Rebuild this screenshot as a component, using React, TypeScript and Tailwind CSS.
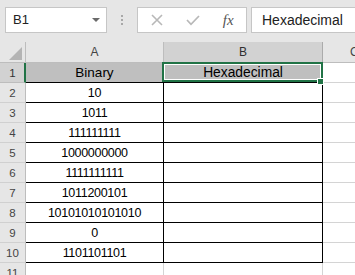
const binaries = [
  '10',
  '1011',
  '111111111',
  '1000000000',
  '1111111111',
  '1011200101',
  '10101010101010',
  '0',
  '1101101101',
];

const font = "font-['Liberation_Sans',Arial,sans-serif]";

function CancelIcon() {
  return (
    <svg width="12" height="12" viewBox="0 0 12 12">
      <path d="M1 1L11 11M11 1L1 11" stroke="#b8b8b8" strokeWidth="1.6" />
    </svg>
  );
}

function EnterIcon() {
  return (
    <svg width="14" height="11" viewBox="0 0 14 11">
      <path d="M1 5L5 9.3L13 1" fill="none" stroke="#b8b8b8" strokeWidth="1.7" />
    </svg>
  );
}

function Toolbar() {
  return (
    <div className="flex h-[42px] items-start bg-[#e6e6e6] pl-[5px] pt-[7px]">
      {/* Name box */}
      <div className="flex h-[26px] w-[102px] shrink-0 items-center justify-between border border-[#c6c6c6] bg-white pl-[7px] pr-[6px]">
        <span className="text-[13px] text-[#222]">B1</span>
        <svg width="8" height="6" viewBox="0 0 8 6">
          <path d="M0 1H8L4 5Z" fill="#6a6a6a" />
        </svg>
      </div>

      {/* Separator dots */}
      <div className="flex h-[26px] w-[30px] shrink-0 flex-col items-center justify-center gap-[2px]">
        <span className="h-[2px] w-[2px] bg-[#a8a8a8]" />
        <span className="h-[2px] w-[2px] bg-[#a8a8a8]" />
        <span className="h-[2px] w-[2px] bg-[#a8a8a8]" />
      </div>

      {/* Cancel / enter / function */}
      <div className="flex h-[26px] w-[110px] shrink-0 items-center border border-[#c6c6c6] bg-white pl-[1px]">
        <div className="flex w-[36px] justify-center">
          <CancelIcon />
        </div>
        <div className="flex w-[36px] justify-center">
          <EnterIcon />
        </div>
        <div className="flex w-[36px] justify-center">
          <span className="font-['Liberation_Serif',serif] text-[15px] italic text-[#555]">fx</span>
        </div>
      </div>

      {/* Formula bar */}
      <div className="ml-[4px] flex h-[26px] w-[130px] shrink-0 items-center border border-[#c6c6c6] bg-white pl-[10px]">
        <span className="text-[14px] text-[#222]">Hexadecimal</span>
      </div>
    </div>
  );
}

function HeaderRow() {
  return (
    <div className="grid h-[21px] grid-cols-[26px_138px_159px_1fr] grid-rows-[21px] bg-[#e6e6e6] text-[12px] leading-[14px] text-[#444]">
      <div className="flex items-end justify-end border-b border-r border-[#bdbdbd] pb-[2px] pr-[3px]">
        <svg width="13" height="13" viewBox="0 0 13 13">
          <path d="M13 0V13H0Z" fill="#b4b4b4" />
        </svg>
      </div>
      <div className="flex items-center justify-center border-b border-r border-[#bdbdbd]">A</div>
      <div className="flex items-center justify-center border-b border-r border-[#ababab] bg-[#d2d2d2] text-[#2f2f2f]">
        B
      </div>
      <div className="flex items-center border-b border-[#bdbdbd] pl-[27px]">C</div>
    </div>
  );
}

function DataRow({ n, value }: { n: number; value: string }) {
  return (
    <div className="grid h-[20px] grid-cols-[26px_138px_159px_1fr] grid-rows-[20px] leading-[16px]">
      <div className="flex items-center justify-center border-b border-r border-b-[#d0d0d0] border-r-[#bdbdbd] bg-[#e6e6e6] pt-[1px] text-[11.5px] text-[#444]">
        {n}
      </div>
      <div className="flex items-center justify-center border-b border-r border-black pt-[1px] text-[12.5px] tracking-[-0.3px] text-black">
        {value}
      </div>
      <div className="border-b border-r border-black bg-white" />
      <div className="border-b border-[#d4d4d4]" />
    </div>
  );
}

export default function App() {
  return (
    <div className={`h-[275px] w-[355px] overflow-hidden bg-white ${font}`}>
      <Toolbar />
      <HeaderRow />

      {/* Row 1: titles */}
      <div className="grid h-[20px] grid-cols-[26px_138px_159px_1fr] grid-rows-[20px] leading-[16px]">
        <div className="flex items-center justify-center border-b border-r-2 border-b-[#bdbdbd] border-r-[#217346] bg-[#d2d2d2] pl-[1px] pt-[1px] text-[11.5px] text-[#333]">
          1
        </div>
        <div className="flex items-center justify-center border-b border-r border-black bg-[#bfbfbf] pt-[1px] text-[13.5px] text-black">
          Binary
        </div>
        <div className="relative flex items-center justify-center border-b border-r border-black bg-[#bfbfbf] pt-[1px] text-[13.8px] text-black">
          Hexadecimal
          <div className="absolute -left-[2px] -right-[1px] -top-[1px] bottom-0 border-2 border-[#217346] shadow-[inset_0_0_0_1px_white]" />
          <div className="absolute -bottom-[3px] -right-[2px] h-[7px] w-[7px] border border-white bg-[#217346]" />
        </div>
        <div className="border-b border-[#d4d4d4]" />
      </div>

      {binaries.map((b, i) => (
        <DataRow key={i} n={i + 2} value={b} />
      ))}

      {/* Row 11: empty */}
      <div className="grid h-[20px] grid-cols-[26px_138px_159px_1fr] grid-rows-[20px] leading-[16px]">
        <div className="flex items-center justify-center border-b border-r border-b-[#d0d0d0] border-r-[#bdbdbd] bg-[#e6e6e6] pt-[1px] text-[11.5px] text-[#444]">
          11
        </div>
        <div className="border-b border-r border-[#d4d4d4]" />
        <div className="border-b border-r border-[#d4d4d4]" />
        <div className="border-b border-[#d4d4d4]" />
      </div>
    </div>
  );
}
